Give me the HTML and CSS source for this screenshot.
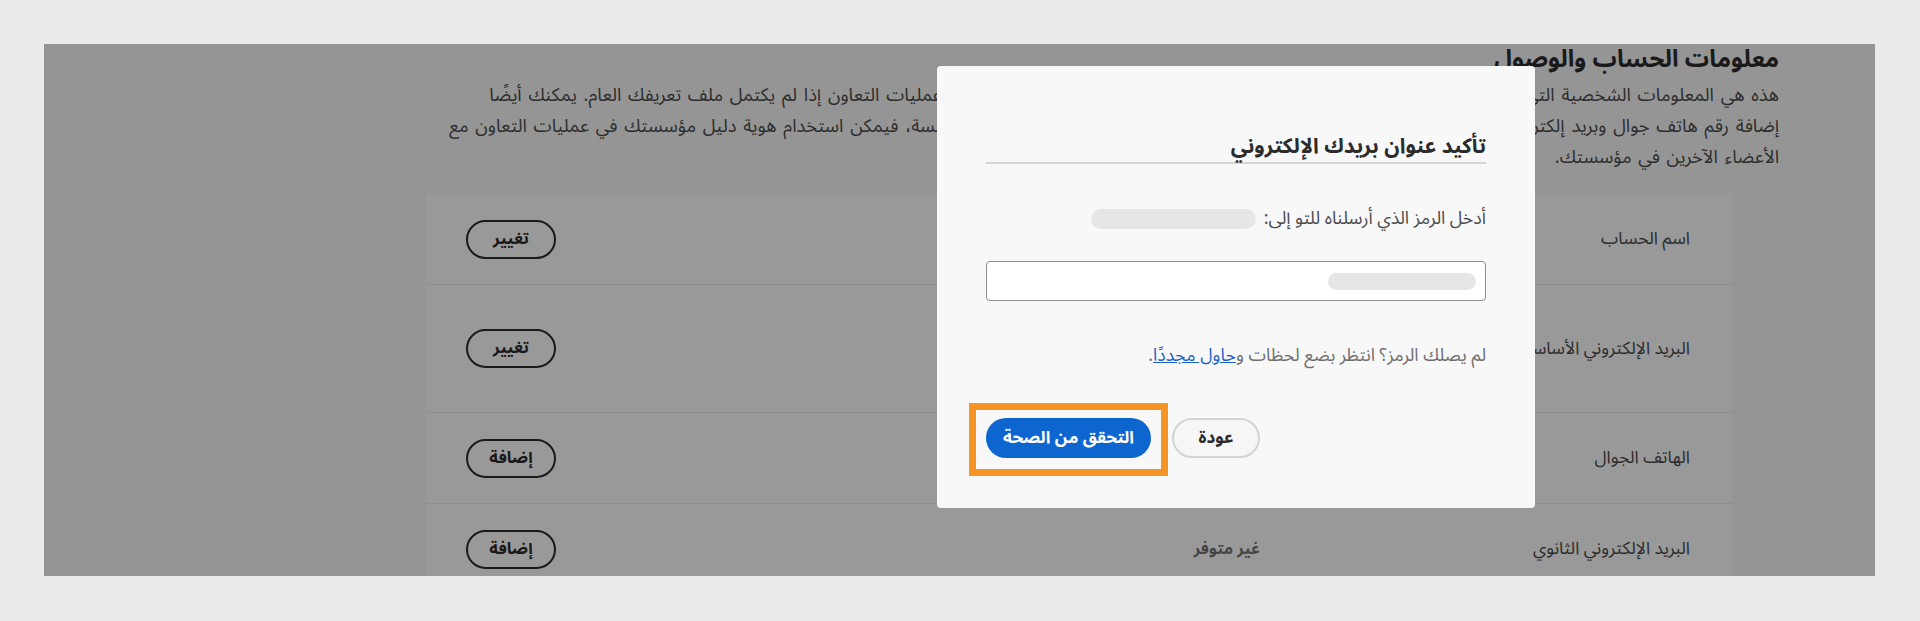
FILE: index.html
```html
<!DOCTYPE html>
<html lang="ar">
<head>
<meta charset="utf-8">
<title>معلومات الحساب والوصول</title>
<link rel="stylesheet" href="styles.css">
</head>
<body>
<div class="frame">
  <div class="panel">
    <main class="page" dir="rtl">
      <h1 class="page-title">معلومات الحساب والوصول</h1>
      <p class="page-desc">
        <span class="line">هذه هي المعلومات الشخصية  التي نستخدمها لتعريفك في منتجات Adobe وخدماتها، بما في ذلك مشاركاتك في عمليات التعاون إذا لم يكتمل ملف تعريفك العام. يمكنك أيضًا</span>
        <span class="line">إضافة رقم هاتف جوال وبريد إلكتروني ثانوي إلى حسابك لاستخدامها في استرداد الحساب. وإذا كنت عضوًا في مؤسسة، فيمكن استخدام هوية دليل مؤسستك في عمليات التعاون مع</span>
        <span class="line">الأعضاء الآخرين في مؤسستك.</span>
      </p>
      <section class="cards">
        <div class="row">
          <div class="row-label">اسم الحساب</div>
          <div class="row-value"></div>
          <div class="row-action"><button class="btn-outline">تغيير</button></div>
        </div>
        <div class="row row-tall">
          <div class="row-label">البريد الإلكتروني الأساسي</div>
          <div class="row-value"></div>
          <div class="row-action"><button class="btn-outline">تغيير</button></div>
        </div>
        <div class="row">
          <div class="row-label">الهاتف الجوال</div>
          <div class="row-value"></div>
          <div class="row-action"><button class="btn-outline">إضافة</button></div>
        </div>
        <div class="row">
          <div class="row-label">البريد الإلكتروني الثانوي</div>
          <div class="row-value muted">غير متوفر</div>
          <div class="row-action"><button class="btn-outline">إضافة</button></div>
        </div>
      </section>
    </main>
    <div class="overlay"></div>
    <div class="dialog" dir="rtl">
      <h2 class="dialog-title">تأكيد عنوان بريدك الإلكتروني</h2>
      <div class="dialog-divider"></div>
      <p class="dialog-text">أدخل الرمز الذي أرسلناه للتو إلى: <span class="redacted redacted-email"></span></p>
      <div class="code-input"><span class="redacted redacted-code"></span></div>
      <p class="dialog-hint">لم يصلك الرمز؟ انتظر بضع لحظات و<a class="link" href="#">حاول مجددًا</a>.</p>
      <div class="dialog-actions">
        <button class="btn-secondary">عودة</button>
        <button class="btn-cta">التحقق من الصحة</button>
      </div>
    </div>
  </div>
</div>
</body>
</html>
```
FILE: styles.css
```css
* { box-sizing: border-box; }

html, body {
  margin: 0;
  background: #ebebeb;
  font-family: "Noto Sans Arabic", "Noto Sans", "DejaVu Sans", sans-serif;
}

.frame {
  padding: 44px 45px 0 44px;
}

.panel {
  position: relative;
  width: 1831px;
  height: 532px;
  overflow: hidden;
  background: #f9f9f9;
}

.page {
  padding: 1px 96px 0 0;
  color: #4b4b4b;
}

.page-title {
  margin: 0;
  font-size: 24px;
  line-height: 30px;
  font-weight: 700;
  color: #2c2c2c;
}

.page-desc {
  margin: 5px 0 0;
  font-size: 18.3px;
  line-height: 31px;
  word-spacing: 2px;
}

.page-desc .line {
  display: block;
  white-space: nowrap;
}

.cards {
  margin: 21px 47px 0 0;
  width: 1306px;
  background: #fff;
}

.row {
  display: grid;
  grid-template-columns: 472px 1fr auto;
  align-items: center;
  height: 91px;
  border-top: 1px solid #ececec;
}

.row:first-child {
  height: 90px;
  border-top: 0;
}

.row-tall {
  height: 128px;
}

.row-label {
  padding-right: 42px;
  font-size: 17.4px;
  line-height: 24px;
  color: #4b4b4b;
}

.row-value {
  font-size: 16px;
  line-height: 24px;
}

.row-value.muted {
  color: #747474;
  font-weight: 700;
}

.row-action {
  padding-left: 40px;
}

.btn-outline {
  min-width: 90px;
  height: 39px;
  padding: 0 14px;
  border: 2px solid #2c2c2c;
  border-radius: 20px;
  background: transparent;
  font: 700 16.5px/1 "Noto Sans Arabic", "Noto Sans", "DejaVu Sans", sans-serif;
  color: #2c2c2c;
}

.overlay {
  position: absolute;
  inset: 0;
  background: rgba(0, 0, 0, 0.4);
}

.dialog {
  position: absolute;
  top: 22px;
  left: 893px;
  width: 598px;
  height: 442px;
  padding: 66px 49px 50px;
  background: #f8f8f8;
  border-radius: 4px;
  color: #4b4b4b;
}

.dialog-title {
  margin: 0;
  font-size: 21px;
  line-height: 28px;
  font-weight: 700;
  color: #2c2c2c;
}

.dialog-divider {
  height: 2px;
  margin-top: 2px;
  background: #d5d5d5;
}

.dialog-text {
  display: flex;
  align-items: center;
  gap: 8px;
  margin: 45px 0 0;
  font-size: 17.8px;
  line-height: 20px;
}

.redacted {
  display: inline-block;
  background: #e6e6e6;
}

.redacted-email {
  width: 165px;
  height: 20px;
  border-radius: 10px;
}

.code-input {
  display: flex;
  align-items: center;
  height: 40px;
  margin-top: 32px;
  padding-right: 9px;
  background: #fff;
  border: 1px solid #8f8f8f;
  border-radius: 4px;
}

.redacted-code {
  width: 148px;
  height: 17px;
  border-radius: 9px;
}

.dialog-hint {
  margin: 45px 0 0;
  font-size: 17.7px;
  line-height: 20px;
  color: #6e6e6e;
}

.link {
  color: #1b63c6;
  text-decoration: underline;
}

.dialog-actions {
  display: flex;
  justify-content: flex-end;
  gap: 21px;
  margin-top: 52px;
}

.btn-secondary,
.btn-cta {
  height: 40px;
  border-radius: 20px;
  font: 700 17px/1 "Noto Sans Arabic", "Noto Sans", "DejaVu Sans", sans-serif;
}

.btn-secondary {
  width: 88px;
  border: 2px solid #d3d3d3;
  background: #f6f6f6;
  color: #2c2c2c;
}

.btn-cta {
  position: relative;
  width: 165px;
  border: 0;
  background: #0d66d0;
  color: #fff;
}

.btn-cta::after {
  content: "";
  position: absolute;
  top: -15px;
  bottom: -18px;
  left: -17px;
  right: -17px;
  border: 7px solid #f39424;
}
```
